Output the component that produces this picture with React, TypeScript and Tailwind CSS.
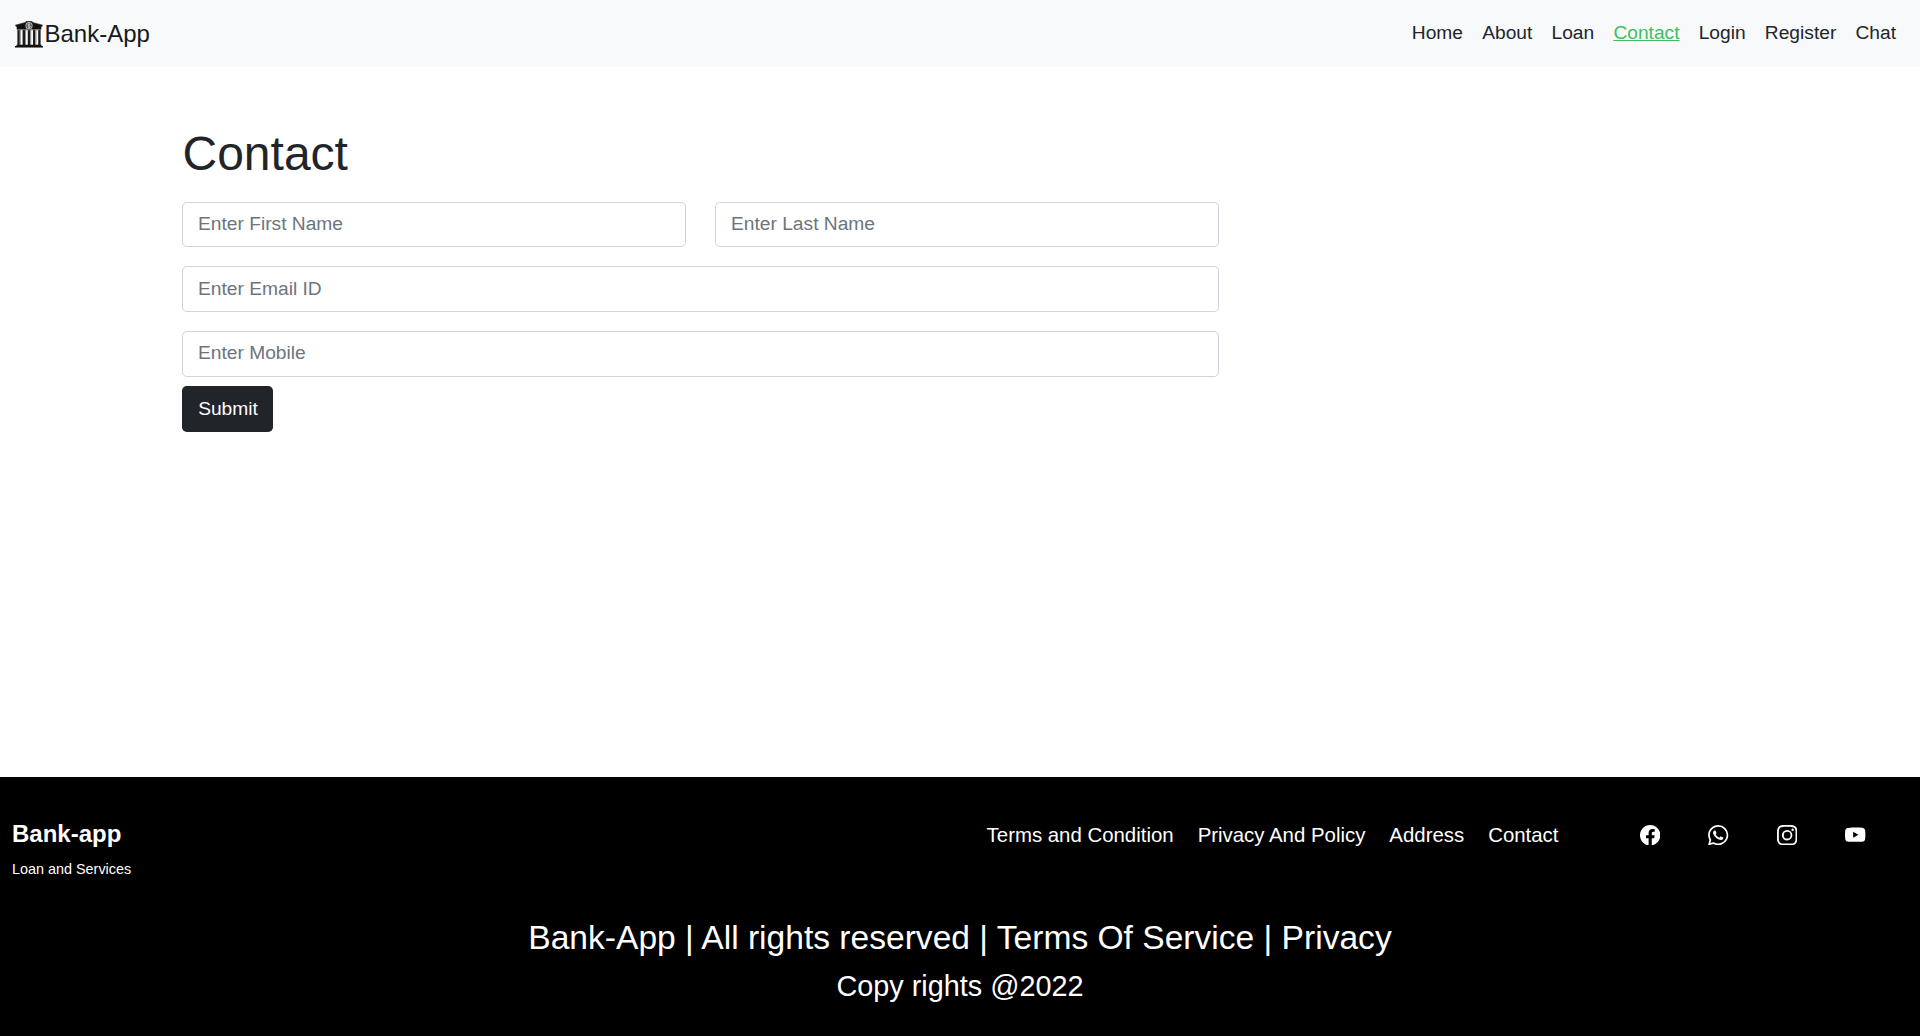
import { BsFacebook, BsInstagram, BsWhatsapp, BsYoutube } from "react-icons/bs";

const navItems = ["Home", "About", "Loan", "Contact", "Login", "Register", "Chat"];
const footerLinks = ["Terms and Condition", "Privacy And Policy", "Address", "Contact"];
const socials = [
  { name: "Facebook", Icon: BsFacebook },
  { name: "WhatsApp", Icon: BsWhatsapp },
  { name: "Instagram", Icon: BsInstagram },
  { name: "YouTube", Icon: BsYoutube },
];

function BankLogo() {
  return (
    <svg viewBox="0 0 28 28" className="size-7 shrink-0" aria-hidden="true">
      <path d="M.3 4.800 9.500 2.200 11.500.9h5l2 1.300 9.200 2.600v1.400H.3z" fill="#555" />
      <path d="M.8 5.200 9.800 2.900l2-1.300h4.400l2 1.300 9 2.300v1l-.9.500v2.700H1.700V6.700l-.9-.5z" fill="#111" />
      <circle cx="14" cy="5.700" r="3.600" fill="#bbb" />
      <circle cx="14" cy="5.700" r="2.600" fill="#444" />
      <path
        d="M15.300 4.600c-.6-.8-2.500-.7-2.500.3 0 1.100 2.600.6 2.600 1.700 0 1-2.100 1-2.700.2M14 3.600v4.300"
        fill="none"
        stroke="#eee"
        strokeWidth=".7"
      />
      <path
        d="M2.400 9.400h2.400v15.800H2.400zM7.600 9.400H10v15.800H7.600zM12.800 9.400h2.400v15.800h-2.400zM18 9.400h2.400v15.800H18zM23.200 9.400h2.400v15.800h-2.400z"
        fill="#1c1c1c"
      />
      <path
        d="M5.300 10v15M10.500 10v15M15.700 10v15M20.900 10v15"
        stroke="#8c8c8c"
        strokeWidth="1"
      />
      <path d="M2 9.800h24" stroke="#777" strokeWidth=".8" />
      <path d="M1.500 24.800h25v1.200H28v1.600H0V26h1.500z" fill="#111" />
      <path d="M0 27.800h28" stroke="#777" strokeWidth=".6" />
    </svg>
  );
}

function Field({ placeholder, size }: { placeholder: string; size: string }) {
  return (
    <input
      type="text"
      placeholder={placeholder}
      className={`${size} w-full rounded-[4.8px] border border-[#ced4da] bg-white px-[14.4px] pl-[15px] text-[19.2px] text-[#212529] outline-none placeholder:text-[#6c757d]`}
    />
  );
}

export default function App() {
  return (
    <div className="flex h-[1036px] flex-col overflow-hidden bg-white font-['Liberation_Sans',Arial,sans-serif] text-[#212529]">
      <nav className="flex h-[67px] shrink-0 items-center justify-between bg-[#f8f9fa] pr-[14.4px] pl-[15px]">
        <a className="flex items-center gap-[1.5px] text-[24px] leading-9 text-[#16181b]">
          <BankLogo />
          Bank-App
        </a>
        <ul className="flex pb-[2px] text-[19.2px] leading-7">
          {navItems.map((item) => (
            <li key={item} className="px-[9.6px]">
              <a className={item === "Contact" ? "text-[#40bf60] underline" : ""}>{item}</a>
            </li>
          ))}
        </ul>
      </nav>

      <main className="flex-1 pt-[58px] pl-[182px]">
        <form className="w-[1037px]">
          <h1 className="pl-[0.5px] text-[48px] leading-[58px]">Contact</h1>
          <div className="mt-[19px] grid grid-cols-2 gap-x-[29px]">
            <Field placeholder="Enter First Name" size="h-[45px] pb-[1px]" />
            <Field placeholder="Enter Last Name" size="h-[45px] pb-[1px]" />
          </div>
          <div className="mt-[19px] flex flex-col gap-[19px]">
            <Field placeholder="Enter Email ID" size="h-[46px] pb-[1px]" />
            <Field placeholder="Enter Mobile" size="h-[46px] pb-[3px]" />
          </div>
          <button
            type="button"
            className="mt-[9px] flex h-[46px] w-[91px] items-center justify-center rounded-[4.8px] bg-[#212529] pl-[1px] text-[19.2px] text-white"
          >
            Submit
          </button>
        </form>
      </main>

      <footer className="h-[259px] shrink-0 bg-black text-white">
        <div className="flex h-[137px] items-start justify-between pt-[39px] pr-[54.4px] pl-3">
          <div>
            <h2 className="text-[24px] leading-9 font-bold">Bank-app</h2>
            <p className="mt-[6px] text-[14.4px] leading-[22px]">Loan and Services</p>
          </div>
          <div className="flex items-center pt-[1px]">
            <ul className="flex gap-6 text-[20.4px] leading-9">
              {footerLinks.map((link) => (
                <li key={link}>
                  <a>{link}</a>
                </li>
              ))}
            </ul>
            <ul className="ml-[81.600px] flex gap-12">
              {socials.map(({ name, Icon }) => (
                <li key={name}>
                  <a aria-label={name}>
                    <Icon className="size-[20.4px]" />
                  </a>
                </li>
              ))}
            </ul>
          </div>
        </div>
        <div className="flex flex-col items-center pt-1">
          <h3 className="text-[33.6px] leading-10">Bank-App | All rights reserved | Terms Of Service | Privacy</h3>
          <h4 className="mt-[11px] text-[28.8px] leading-[35px]">Copy rights @2022</h4>
        </div>
      </footer>
    </div>
  );
}
